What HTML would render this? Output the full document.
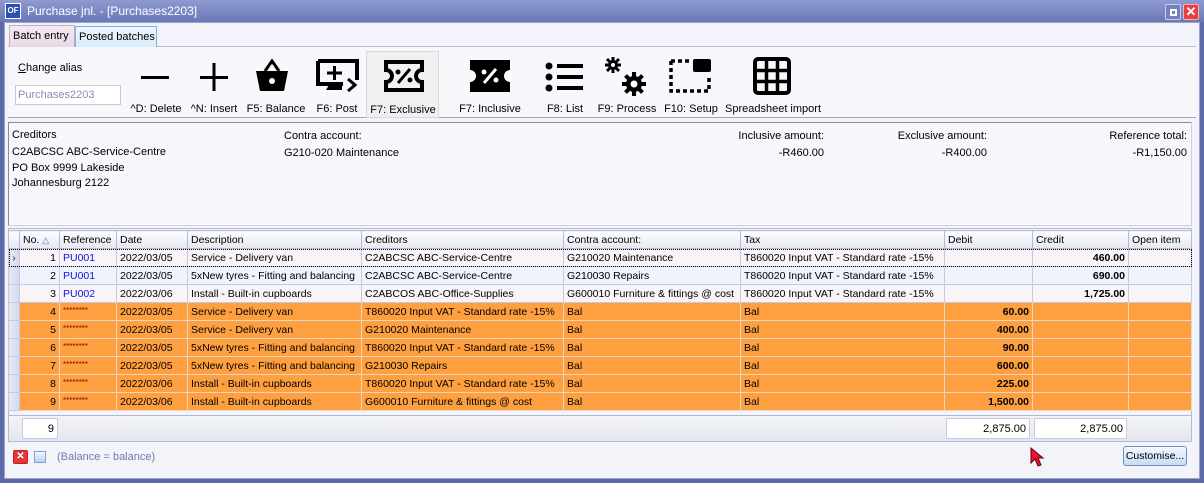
<!DOCTYPE html>
<html><head><meta charset="utf-8"><style>
*{box-sizing:border-box;margin:0;padding:0}
body{width:1204px;height:483px;overflow:hidden;background:#5d6aa8;font-family:"Liberation Sans",sans-serif;font-size:11px;color:#000;position:relative}
.a{position:absolute;white-space:nowrap}
#title{left:0;top:0;width:1204px;height:22px;background:linear-gradient(#8e9ad0,#6a78b8);color:#fff;font-size:12px}
#client{left:4px;top:22px;width:1196px;height:457px;background:#f3f4f9;border:1px solid #9aa3cc}
.tab{top:26px;height:21px;border:1px solid #b8b8d0;border-bottom:none;padding:4px 3px 0;font-size:11px;white-space:nowrap}
.tb{top:103px;font-size:11px;text-align:center}
.ic{position:absolute}
table{border-collapse:collapse;table-layout:fixed;position:absolute;left:8px;top:230px;width:1183px}
td{height:18px;border:1px solid #c4c8e4;padding:0 3px;white-space:nowrap;overflow:hidden;font-size:10.5px}
tr.h td{background:linear-gradient(#fdfdff,#e6e8f2);border-color:#b4b9d8}
td.ri{background:linear-gradient(90deg,#e8eaf2,#d4d8e8);padding:0}
tr.p td{background:#f8f4f8}
tr.b td{background:#eef3fc}
tr.o td{background:#ffa040;border-color:#e8d8c8}
tr.o td.ri,tr.p td.ri,tr.b td.ri{background:linear-gradient(90deg,#e8eaf2,#d4d8e8);border-color:#c4c8e4}
.r{text-align:right}.bd{font-weight:bold}.l{color:#1010e0}
.st{color:#800;font-size:8px;vertical-align:top}
</style></head><body>
<div class="a" id="title">
 <div class="a" style="left:5px;top:3px;width:16px;height:16px;background:#2850b0;border:1px solid #fff;color:#fff;font-size:8px;font-weight:bold;line-height:14px;text-align:center">OF</div>
 <div class="a" style="left:27px;top:4px">Purchase jnl. - [Purchases2203]</div>
 <div class="a" style="left:1165px;top:4px;width:16px;height:16px;background:#7480c0;border:1px solid #c8cce8;border-radius:2px"><div style="margin:4px;width:7px;height:7px;border:2px solid #fff"></div></div>
 <div class="a" style="left:1183px;top:4px;width:16px;height:16px;background:#e84040;border:1px solid #f8b0b0;border-radius:2px;color:#fff;font-weight:bold;font-size:13px;line-height:14px;text-align:center">✕</div>
</div>
<div class="a" id="client"></div>
<div class="a" style="left:8px;top:46px;width:1188px;height:72px;background:#f8f8fc;border-top:1px solid #b8bcd8;border-bottom:1px solid #a0a4c0"></div>
<div class="a tab" style="left:9px;top:25px;width:66px;height:22px;background:linear-gradient(#f6eaf2,#e8d8e6);border-color:#c8a8c8">Batch entry</div>
<div class="a tab" style="left:75px;width:82px;background:linear-gradient(#f0f8ff,#d8ecfa);border-color:#80b0e0">Posted batches</div>
<div class="a" style="left:18px;top:62px"><u>C</u>hange alias</div>
<div class="a" style="left:15px;top:85px;width:106px;height:20px;border:1px solid #c8c8d0;background:#fff;color:#8a8ab8;padding:3px 2px">Purchases2203</div>
<div class="a" style="left:366px;top:51px;width:73px;height:67px;background:#f0f0f0;border:1px solid #d8d8d8"></div>
<svg class="ic" style="left:140px;top:62px" width="30" height="30"><rect x="1" y="14" width="28" height="3"/></svg>
<svg class="ic" style="left:199px;top:62px" width="30" height="30"><rect x="1" y="14" width="28" height="3"/><rect x="13.5" y="1" width="3" height="28"/></svg>
<svg class="ic" style="left:255px;top:58px" width="34" height="34"><path d="M10 13 L17 3 L24 13" fill="none" stroke="#000" stroke-width="3"/><path d="M1 13 H33 L29 33 H5 Z"/><circle cx="17" cy="23" r="3" fill="#fff"/></svg>
<svg class="ic" style="left:315px;top:58px" width="46" height="36"><path d="M3 3 H42 V22 M3 3 V26 H28" fill="none" stroke="#000" stroke-width="4"/><rect x="18" y="8" width="3" height="14"/><rect x="12" y="13.5" width="15" height="3"/><path d="M14 27 H27 V32 H11Z"/><path d="M33 21 L40 27 L33 33" fill="none" stroke="#000" stroke-width="3"/></svg>
<svg class="ic" style="left:383px;top:59px" width="42" height="34"><path d="M3 3 H39 V11 A6 6 0 0 0 39 23 V31 H3 V23 A6 6 0 0 0 3 11 Z" fill="none" stroke="#000" stroke-width="4"/><path d="M15 24 L27 10" stroke="#000" stroke-width="3"/><circle cx="15" cy="13" r="2.5"/><circle cx="27" cy="21" r="2.5"/></svg>
<svg class="ic" style="left:469px;top:59px" width="42" height="34"><path d="M1 1 H41 V11 A6 6 0 0 0 41 23 V33 H1 V23 A6 6 0 0 0 1 11 Z"/><path d="M15 24 L27 10" stroke="#fff" stroke-width="3"/><circle cx="15" cy="13" r="2.5" fill="#fff"/><circle cx="27" cy="21" r="2.5" fill="#fff"/></svg>
<svg class="ic" style="left:545px;top:62px" width="40" height="30"><circle cx="4" cy="4" r="3.5"/><circle cx="4" cy="15" r="3.5"/><circle cx="4" cy="26" r="3.5"/><rect x="12" y="2" width="26" height="4"/><rect x="12" y="13" width="26" height="4"/><rect x="12" y="24" width="26" height="4"/></svg>
<svg class="ic" style="left:604px;top:56px" width="46" height="40"><g transform="translate(9,9)"><circle r="5"/><g stroke="#000" stroke-width="3"><path d="M0 -8V8M-8 0H8M-6 -6L6 6M-6 6L6 -6"/></g><circle r="2" fill="#fff"/></g><g transform="translate(30,28)"><circle r="8"/><g stroke="#000" stroke-width="4"><path d="M0 -12V12M-12 0H12M-8.5 -8.5L8.5 8.5M-8.5 8.5L8.5 -8.5"/></g><circle r="3.5" fill="#fff"/></g></svg>
<svg class="ic" style="left:668px;top:58px" width="44" height="36"><path d="M3 3 H22 M3 3 V33 H41 V18" fill="none" stroke="#000" stroke-width="3.5" stroke-dasharray="4 3"/><rect x="25" y="1" width="18" height="13" rx="2"/></svg>
<svg class="ic" style="left:753px;top:57px" width="38" height="38"><rect x="2" y="2" width="34" height="34" rx="3" fill="none" stroke="#000" stroke-width="4"/><path d="M13.5 2V36M24.5 2V36M2 13.5H36M2 24.5H36" stroke="#000" stroke-width="3.5"/></svg>
<div class="a tb" style="left:128px;width:56px">^D: Delete</div>
<div class="a tb" style="left:187px;width:54px">^N: Insert</div>
<div class="a tb" style="left:244px;width:64px">F5: Balance</div>
<div class="a tb" style="left:313px;width:48px">F6: Post</div>
<div class="a tb" style="left:368px;width:70px;top:104px">F7: Exclusive</div>
<div class="a tb" style="left:455px;width:70px">F7: Inclusive</div>
<div class="a tb" style="left:543px;width:44px">F8: List</div>
<div class="a tb" style="left:595px;width:64px">F9: Process</div>
<div class="a tb" style="left:662px;width:58px">F10: Setup</div>
<div class="a tb" style="left:724px;width:98px">Spreadsheet import</div>
<div class="a" style="left:8px;top:122px;width:1184px;height:104px;border:1px solid #8a8a9a;border-right-color:#d0d0dc;border-bottom-color:#d0d0dc;background:#f8f8fc"></div>
<div class="a" style="left:12px;top:128px;line-height:15px">Creditors<br><span style="line-height:18px">C2ABCSC ABC-Service-Centre</span><br>PO Box 9999 Lakeside<br>Johannesburg 2122</div>
<div class="a" style="left:284px;top:128px;line-height:17px">Contra account:<br>G210-020 Maintenance</div>
<div class="a r" style="left:700px;top:128px;width:124px;line-height:17px">Inclusive amount:<br>-R460.00</div>
<div class="a r" style="left:860px;top:128px;width:127px;line-height:17px">Exclusive amount:<br>-R400.00</div>
<div class="a r" style="left:1060px;top:128px;width:127px;line-height:17px">Reference total:<br>-R1,150.00</div>
<div class="a" style="left:8px;top:228px;width:1184px;height:214px;border:1px solid #b4b9d8;background:#f3f4f9"></div>
<table>
<colgroup><col style="width:11px"><col style="width:40px"><col style="width:57px"><col style="width:71px"><col style="width:174px"><col style="width:202px"><col style="width:177px"><col style="width:204px"><col style="width:88px"><col style="width:96px"><col style="width:63px"></colgroup>
<tr class="h"><td class="ri"></td><td>No. <span style="color:#6070b0;font-size:9px">△</span></td><td>Reference</td><td>Date</td><td>Description</td><td>Creditors</td><td>Contra account:</td><td>Tax</td><td>Debit</td><td>Credit</td><td>Open item</td></tr>
<tr class="p" style="outline:1px dotted #000;outline-offset:-1px"><td class="ri" style="color:#5060b0;font-weight:bold;text-align:center">›</td><td class="r">1</td><td class="l">PU001</td><td>2022/03/05</td><td>Service - Delivery van</td><td>C2ABCSC ABC-Service-Centre</td><td>G210020 Maintenance</td><td>T860020 Input VAT - Standard rate -15%</td><td></td><td class="r bd">460.00</td><td></td></tr>
<tr class="b"><td class="ri"></td><td class="r">2</td><td class="l">PU001</td><td>2022/03/05</td><td>5xNew tyres - Fitting and balancing</td><td>C2ABCSC ABC-Service-Centre</td><td>G210030 Repairs</td><td>T860020 Input VAT - Standard rate -15%</td><td></td><td class="r bd">690.00</td><td></td></tr>
<tr class="p"><td class="ri"></td><td class="r">3</td><td class="l">PU002</td><td>2022/03/06</td><td>Install - Built-in cupboards</td><td>C2ABCOS ABC-Office-Supplies</td><td>G600010 Furniture &amp; fittings @ cost</td><td>T860020 Input VAT - Standard rate -15%</td><td></td><td class="r bd">1,725.00</td><td></td></tr>
<tr class="o"><td class="ri"></td><td class="r">4</td><td><span class="st">********</span></td><td>2022/03/05</td><td>Service - Delivery van</td><td>T860020 Input VAT - Standard rate -15%</td><td>Bal</td><td>Bal</td><td class="r bd">60.00</td><td></td><td></td></tr>
<tr class="o"><td class="ri"></td><td class="r">5</td><td><span class="st">********</span></td><td>2022/03/05</td><td>Service - Delivery van</td><td>G210020 Maintenance</td><td>Bal</td><td>Bal</td><td class="r bd">400.00</td><td></td><td></td></tr>
<tr class="o"><td class="ri"></td><td class="r">6</td><td><span class="st">********</span></td><td>2022/03/05</td><td>5xNew tyres - Fitting and balancing</td><td>T860020 Input VAT - Standard rate -15%</td><td>Bal</td><td>Bal</td><td class="r bd">90.00</td><td></td><td></td></tr>
<tr class="o"><td class="ri"></td><td class="r">7</td><td><span class="st">********</span></td><td>2022/03/05</td><td>5xNew tyres - Fitting and balancing</td><td>G210030 Repairs</td><td>Bal</td><td>Bal</td><td class="r bd">600.00</td><td></td><td></td></tr>
<tr class="o"><td class="ri"></td><td class="r">8</td><td><span class="st">********</span></td><td>2022/03/06</td><td>Install - Built-in cupboards</td><td>T860020 Input VAT - Standard rate -15%</td><td>Bal</td><td>Bal</td><td class="r bd">225.00</td><td></td><td></td></tr>
<tr class="o"><td class="ri"></td><td class="r">9</td><td><span class="st">********</span></td><td>2022/03/06</td><td>Install - Built-in cupboards</td><td>G600010 Furniture &amp; fittings @ cost</td><td>Bal</td><td>Bal</td><td class="r bd">1,500.00</td><td></td><td></td></tr>
</table>
<div class="a" style="left:8px;top:415px;width:1184px;height:27px;background:linear-gradient(#f3f4f9,#e4e6f0);border:1px solid #b4b9d8"></div>
<div class="a r" style="left:22px;top:418px;width:36px;height:21px;background:#fff;border:1px solid #c8cce0;padding:4px 3px">9</div>
<div class="a r" style="left:946px;top:418px;width:84px;height:21px;background:#fff;border:1px solid #c8cce0;padding:4px 3px">2,875.00</div>
<div class="a r" style="left:1034px;top:418px;width:93px;height:21px;background:#fff;border:1px solid #c8cce0;padding:4px 3px">2,875.00</div>
<div class="a" style="left:13px;top:450px;width:15px;height:14px;background:#e03838;border:1px solid #c02020;border-radius:2px;color:#fff;font-size:10px;font-weight:bold;text-align:center;line-height:12px">✕</div>
<div class="a" style="left:34px;top:451px;width:12px;height:12px;background:linear-gradient(#f4f8ff,#b8d0f0);border:1px solid #80a0d0"></div>
<div class="a" style="left:57px;top:451px;color:#7078b0">(Balance = balance)</div>
<svg class="a" style="left:1030px;top:447px" width="16" height="20"><path d="M1 1 V16 L5 12 L8 19 L11 18 L8 11 H13 Z" fill="#e8143c" stroke="#600" stroke-width="1"/></svg>
<div class="a" style="left:1123px;top:446px;width:64px;height:20px;border:1px solid #7090c0;border-radius:3px;background:linear-gradient(#f4f8ff,#c8dcf4);text-align:center;padding-top:3px;font-size:10.5px">Customise...</div>
</body></html>
